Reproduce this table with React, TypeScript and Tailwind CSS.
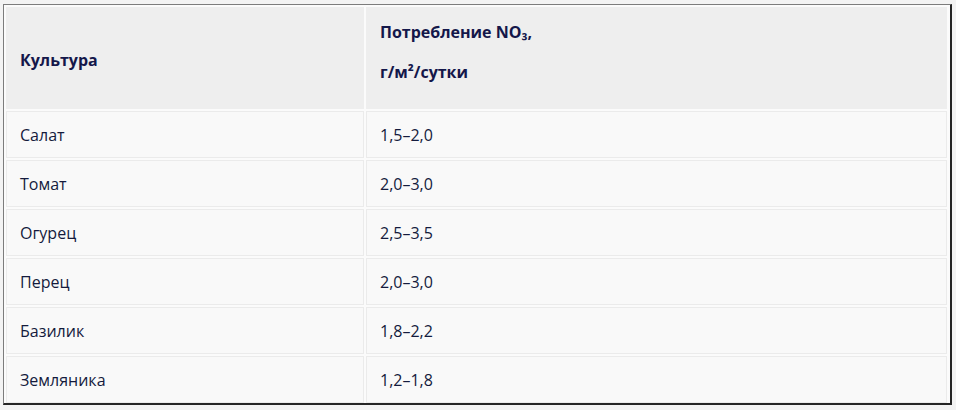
const rows: [string, string][] = [
  ['Салат', '1,5–2,0'],
  ['Томат', '2,0–3,0'],
  ['Огурец', '2,5–3,5'],
  ['Перец', '2,0–3,0'],
  ['Базилик', '1,8–2,2'],
  ['Земляника', '1,2–1,8'],
]

export default function App() {
  return (
    <div className="w-[956px] h-[410px] bg-[#f3f3f3] pt-[4px] pl-[3px] font-['Open_Sans',sans-serif] text-[16px] text-[#141b3d]">
      <div className="w-[949px] h-[401px] border-l border-t border-[#7c7c7c] border-r-2 border-b-2 border-r-[#252525] border-b-[#252525] bg-[#fbfbfb] pl-px pt-px">
        <table className="w-[945px] border-separate border-spacing-[2px] -ml-px -mt-px">
          <colgroup>
            <col className="w-[358px]" />
            <col />
          </colgroup>
          <thead>
            <tr className="h-[102px]">
              <th className="bg-[#eeeeee] border border-[#eeeeee] text-left font-bold px-[13px] pt-[4px] text-[#14174a]">Культура</th>
              <th className="bg-[#eeeeee] border border-[#eeeeee] text-left align-top font-bold px-[13px] pt-[4px] leading-[40px] text-[#14174a]">
                Потребление NO₃,
                <br />
                г/м²/сутки
              </th>
            </tr>
          </thead>
          <tbody>
            {rows.map(([crop, value]) => (
              <tr key={crop} className="h-[47px]">
                <td className="bg-[#f9f9f9] border border-[#ebebeb] px-[13px]">{crop}</td>
                <td className="bg-[#f9f9f9] border border-[#ebebeb] px-[13px]">{value}</td>
              </tr>
            ))}
          </tbody>
        </table>
      </div>
    </div>
  )
}
